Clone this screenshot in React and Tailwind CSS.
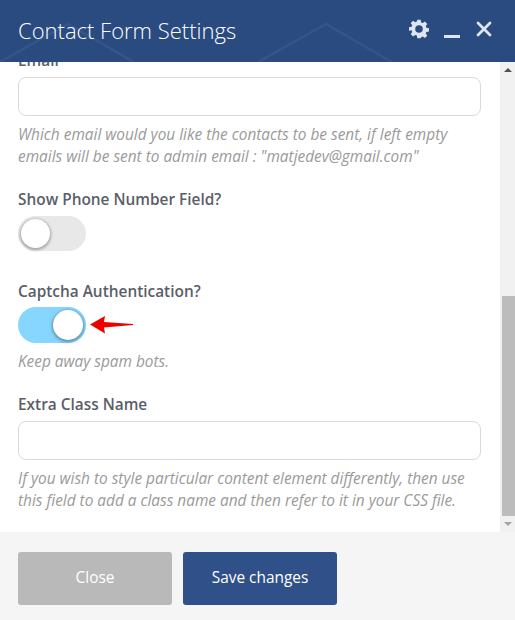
import { X } from 'lucide-react';

function Label({ className, children }) {
  return <div className={`text-[15.4px] leading-[20px] font-semibold text-[#5a5e68] ${className || ''}`}>{children}</div>;
}

function Field({ label, hint }) {
  return (
    <div>
      <Label>{label}</Label>
      <div className="mt-[6px] h-[39px] rounded-[8px] border border-[#d9d9d9] bg-white" />
      <p className="mt-[8px] text-[15.4px] leading-[22px] italic text-[#9a9a9a]">{hint}</p>
    </div>
  );
}

function Toggle({ on }) {
  if (on) {
    return (
      <div className="mt-[5px] relative h-[36px] w-[68px] rounded-full bg-[#86d6ff]">
        <div className="absolute right-[3px] top-[3px] h-[30px] w-[30px] rounded-full bg-white shadow-[0_1px_3px_1px_rgba(60,90,110,0.55)]" />
      </div>
    );
  }
  return (
    <div className="mt-[6px] relative h-[35px] w-[68px] rounded-full bg-[#e8e8e8]">
      <div className="absolute left-[3px] top-[3px] h-[29px] w-[29px] rounded-full bg-white shadow-[0_1px_3px_1px_rgba(0,0,0,0.3)]" />
    </div>
  );
}

export default function App() {
  return (
    <div className="flex h-[620px] w-[515px] flex-col overflow-hidden bg-white font-['Open_Sans',sans-serif]">
      <div className="relative flex h-[62px] shrink-0 items-center overflow-hidden bg-[#2a4b7f] pl-[18px] pr-[22px]">
        <svg className="absolute inset-0" width="515" height="62" fill="none" stroke="#34558a" strokeWidth="2.5">
          <path d="M0 62 L68 24 L134 62" />
          <path d="M258 62 L326 24 L392 62" />
        </svg>
        <div className="relative -mt-[3px] text-[22px] font-light leading-[32px] text-white">Contact Form Settings</div>
        <div className="relative ml-auto mb-[4px] flex items-center text-[#dfe5ee]">
          <svg width="20" height="20" viewBox="0 0 24 24" fill="currentColor">
            <path fillRule="evenodd" d="M10 1h4l.6 3.1 1.9.8 2.6-1.8 2.8 2.8-1.8 2.6.8 1.900 3.100.6v4l-3.100.6-.8 1.900 1.800 2.600-2.800 2.800-2.600-1.800-1.900.8L14 23h-4l-.6-3.100-1.900-.8-2.600 1.800-2.800-2.800 1.800-2.600-.8-1.900L0 14v-4l3.100-.6.8-1.900-1.800-2.600 2.800-2.800 2.600 1.800 1.900-.8L10 1Zm2 6.500a4.500 4.500 0 1 0 0 9 4.500 4.500 0 0 0 0-9Z" />
          </svg>
          <div className="ml-[15px] mt-[14px] h-[3px] w-[16px] bg-[#dfe5ee]" />
          <X size={24} strokeWidth={2.8} className="ml-[12px] -mr-[3px]" />
        </div>
      </div>

      <div className="flex min-h-0 flex-1">
        <div className="min-w-0 flex-1 overflow-hidden pl-[18px] pr-[19px]">
          <div className="-mt-[11px]">
            <Field
              label="Email"
              hint={'Which email would you like the contacts to be sent, if left empty emails will be sent to admin email : "matjedev@gmail.com"'}
            />
            <Label className="mt-[22px]">Show Phone Number Field?</Label>
            <Toggle />
            <Label className="mt-[31px]">Captcha Authentication?</Label>
            <div className="relative">
              <Toggle on />
              <svg className="absolute left-[71px] top-[8px]" width="46" height="20" viewBox="0 0 46 20" fill="#ee0000">
                <path d="M1 9.500 L16 1 L15 7 L44 9 L44 10 L15 12.500 L16 18.500 Z" />
              </svg>
            </div>
            <p className="mt-[8px] text-[15.4px] leading-[22px] italic text-[#9a9a9a]">Keep away spam bots.</p>
            <div className="mt-[22px]">
              <Field
                label="Extra Class Name"
                hint="If you wish to style particular content element differently, then use this field to add a class name and then refer to it in your CSS file."
              />
            </div>
          </div>
        </div>

        <div className="relative w-[15px] shrink-0 bg-[#f1f1f1]">
          <div className="absolute left-[4px] top-[6px] h-0 w-0 border-x-[4px] border-b-[4px] border-x-transparent border-b-[#505050]" />
          <div className="absolute right-0 top-[234px] h-[220px] w-[13px] bg-[#bcbcbc]" />
          <div className="absolute bottom-[6px] left-[4px] h-0 w-0 border-x-[4px] border-t-[4px] border-x-transparent border-t-[#a3a3a3]" />
        </div>
      </div>

      <div className="flex h-[88px] shrink-0 items-start gap-[11px] bg-[#f5f5f5] pl-[18px] pt-[20px]">
        <button className="h-[53px] w-[154px] rounded-[3px] bg-[#b9b9b9] pb-[2px] text-[15.4px] font-normal text-white">Close</button>
        <button className="h-[53px] w-[154px] rounded-[3px] bg-[#2f5088] pb-[2px] text-[15.4px] font-normal text-white">Save changes</button>
      </div>
    </div>
  );
}
